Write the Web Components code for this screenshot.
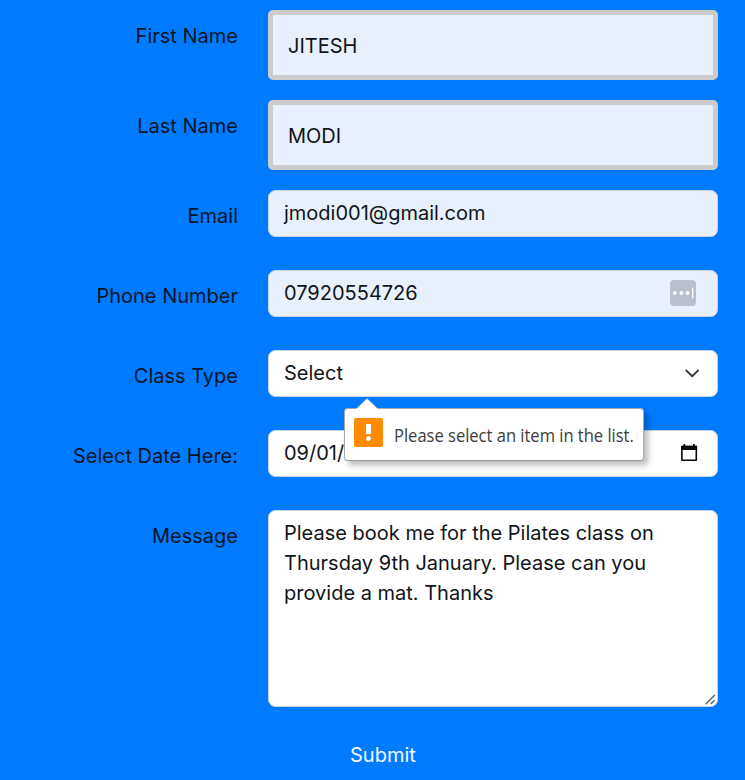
<!DOCTYPE html>
<html lang="en">
<head>
<meta charset="utf-8">
<title>Class booking</title>
<style>
html,body{margin:0;height:780px;overflow:hidden;background:#007bff}
body{font-family:Inter,"Liberation Sans",sans-serif;font-size:20px;line-height:30px;color:#111417}
</style>
</head>
<body>
<booking-form></booking-form>
<script>
class FormRow extends HTMLElement {
  connectedCallback() {
    this.attachShadow({mode:'open'}).innerHTML = `
    <style>
      :host{display:grid;grid-template-columns:238px 450px;column-gap:30px;align-items:start}
      .label{text-align:right;padding-top:10.5px;color:#061527;white-space:nowrap}
    </style>
    <div class="label">${this.getAttribute('label')}</div><slot></slot>`;
  }
}
class FieldBox extends HTMLElement {
  connectedCallback() {
    this.attachShadow({mode:'open'}).innerHTML = `
    <style>
      :host{display:flex;position:relative;box-sizing:border-box;width:450px;height:47px;
        background:#fff;border:1px solid #ced4da;border-radius:7.5px;padding:7px 15px;
        justify-content:space-between;align-items:flex-start}
      :host([filled]){background:#e8f0fe}
      :host([thick]){height:70px;border:5px solid #ccc;border-radius:5px;padding:15.5px 15px}
      :host([area]){height:197px}
      .text{white-space:pre-line}
    </style>
    <div class="text"><slot></slot></div><slot name="icon"></slot>`;
  }
}
const ICONS = {
  autofill:`<svg width="26" height="26" viewBox="0 0 26 26"><rect width="26" height="26" rx="4" fill="#b9c0cb"/><g fill="#fff"><circle cx="4.7" cy="13" r="1.9"/><circle cx="11.2" cy="13" r="1.9"/><circle cx="17.5" cy="13" r="1.9"/><rect x="22" y="7.7" width="1.3" height="10.6"/></g></svg>`,
  chevron:`<svg width="20" height="20" viewBox="0 0 20 20"><path d="m4.2 7.4 6 5.9 6-5.9" fill="none" stroke="#343a40" stroke-width="1.9" stroke-linecap="round" stroke-linejoin="round"/></svg>`,
  calendar:`<svg width="20" height="20" viewBox="0 0 20 20"><path d="M2.9 3.5h14.4v13.8H2.9z" fill="none" stroke="#080808" stroke-width="1.6" stroke-linejoin="round"/><path d="M2.1 2.8h16v4.1h-16zM4.5 1h1.7v3H4.5zM14 1h1.7v3H14z" fill="#080808"/></svg>`,
  grip:`<svg width="11" height="11" viewBox="0 0 11 11"><path d="M1 9.7 9.6 1.2M6.3 9.4 9.4 6.5" fill="none" stroke="#666" stroke-width="1.5" stroke-linecap="round"/></svg>`,
  alert:`<svg width="29" height="29" viewBox="0 0 29 29"><rect width="29" height="29" rx="2" fill="#ff8c00"/><path d="M12 6h5v10h-5z" fill="#fff"/><circle cx="14.5" cy="20.5" r="2.4" fill="#fff"/></svg>`
};
class FormIcon extends HTMLElement {
  connectedCallback() {
    this.attachShadow({mode:'open'}).innerHTML = `<style>:host{display:block;line-height:0}svg{display:block}</style>${ICONS[this.getAttribute('name')]}`;
  }
}
class ValidationTip extends HTMLElement {
  connectedCallback() {
    this.attachShadow({mode:'open'}).innerHTML = `
    <style>
      :host{position:absolute;left:75px;top:57px;z-index:2;box-sizing:border-box;width:300px;height:53px;
        display:flex;align-items:center;gap:11px;padding:0 0 4px 9px;background:#fff;
        border:1px solid #aaa;border-bottom-color:#999;border-radius:4px;box-shadow:4px 4px 6px rgba(0,0,0,.28);
        font:17.6px/24px "Open Sans","Noto Sans",sans-serif;color:#3c3c3c;white-space:nowrap}
      .arrow{position:absolute;left:11px;top:-11px;display:block}
      .msg{transform:translateY(2px) scaleX(.939);transform-origin:left;width:240px}
    </style>
    <svg class="arrow" width="22" height="12" viewBox="0 0 22 12"><path d="M0 12v-1L11 .5 22 11v1z" fill="#fff"/><path d="M.5 10.5 11 .5l10.5 10" fill="none" stroke="#aaa" stroke-width=".6"/></svg>
    <form-icon name="alert"></form-icon><div class="msg"><slot></slot></div>`;
  }
}
class BookingForm extends HTMLElement {
  connectedCallback() {
    this.attachShadow({mode:'open'}).innerHTML = `
    <style>
      :host{display:block;width:745px;height:780px;box-sizing:border-box;padding-top:10px;background:#007bff}
      .rows{display:grid;grid-template-rows:90px 90px 80px 80px 80px 80px 197px}
      .submit{width:745px;box-sizing:border-box;padding-left:350px;margin-top:32.5px;color:#f3f8ff}
      .autofill{margin:2px 6px 0 0}
      .chev{margin:5px 0 0}
      .cal{margin:5px 3px 0 0}
      .grip{position:absolute;right:1px;bottom:1px}
    </style>
    <div class="rows">
      <form-row label="First Name"><field-box filled thick>JITESH</field-box></form-row>
      <form-row label="Last Name"><field-box filled thick>MODI</field-box></form-row>
      <form-row label="Email"><field-box filled>jmodi001@gmail.com</field-box></form-row>
      <form-row label="Phone Number"><field-box filled>07920554726<form-icon slot="icon" class="autofill" name="autofill"></form-icon></field-box></form-row>
      <form-row label="Class Type"><field-box>Select<form-icon slot="icon" class="chev" name="chevron"></form-icon><validation-tip slot="icon">Please select an item in the list.</validation-tip></field-box></form-row>
      <form-row label="Select Date Here:"><field-box>09/01/<form-icon slot="icon" class="cal" name="calendar"></form-icon></field-box></form-row>
      <form-row label="Message"><field-box area>Please book me for the Pilates class on<br>Thursday 9th January. Please can you<br>provide a mat. Thanks<form-icon slot="icon" class="grip" name="grip"></form-icon></field-box></form-row>
    </div>
    <div class="submit">Submit</div>`;
  }
}
customElements.define('form-icon', FormIcon);
customElements.define('validation-tip', ValidationTip);
customElements.define('field-box', FieldBox);
customElements.define('form-row', FormRow);
customElements.define('booking-form', BookingForm);
</script>
</body>
</html>
